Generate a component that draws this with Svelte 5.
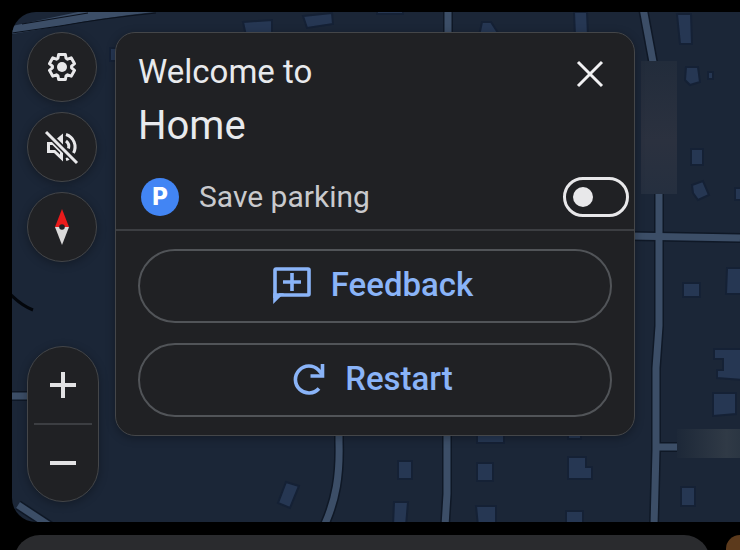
<script>
  let muted = $state(true);
  let saveParking = $state(false);

  // Outline of a six-toothed gear centred on 18,18.
  const gear = [0, 60, 120, 180, 240, 300]
    .flatMap((turn) => [
      [-25, 9.6],
      [-15, 13],
      [15, 13],
      [25, 9.6]
    ].map(([offset, radius]) => {
      const angle = ((turn + offset - 90) * Math.PI) / 180;
      return `${(18 + radius * Math.cos(angle)).toFixed(2)},${(18 + radius * Math.sin(angle)).toFixed(2)}`;
    }))
    .join(' ');

  const roads = [
    'M0 396 H40',
    'M18 505 L50 526',
    'M339 430 V442 C340 475 336 500 324 526',
    'M447 430 V494 L445 526',
    'M448 8 V40',
    'M643 8 L653 62',
    'M659 190 V326 L656 368 V450 L654 526',
    'M630 236 L740 238',
    'M657 447 H678'
  ];

  const buildings = [
    'M243 22 L272 20 V36 H246 Z',
    'M303 16 L332 13 L333 24 L307 28 Z',
    'M377 8 H403 V14 H377 Z',
    'M110 48 H120 V61 H110 Z',
    'M479 36 L482 22 H491 L500 36 Z',
    'M574 12 H587 L588 36 H575 Z',
    'M677 14 H691 L692 44 H680 Z',
    'M686 67 H698 L700 82 L690 85 L685 80 Z',
    'M708 72 H713 V79 H708 Z',
    'M691 149 H703 V165 H691 Z',
    'M692 185 L703 181 L709 195 L698 200 L693 193 Z',
    'M735 188 H742 V200 H735 Z',
    'M683 283 H700 V297 H683 Z',
    'M727 268 H742 V294 H726 Z',
    'M714 349 H742 V380 L717 378 V370 H723 V359 H714 Z',
    'M713 393 H736 V414 L713 416 Z',
    'M681 487 H695 V506 H681 Z',
    'M568 457 H586 V467 H592 V479 H568 Z',
    'M566 511 H583 V526 H566 Z',
    'M568 430 H581 V439 H568 Z',
    'M477 463 H493 V481 H477 Z',
    'M477 430 H504 V443 H477 Z',
    'M476 506 H496 V526 H478 Z',
    'M398 461 H412 V479 H398 Z',
    'M394 502 H408 L406 526 H393 Z',
    'M286 482 L299 486 L290 508 L278 503 Z'
  ];
</script>

<main>
  <section class="map" aria-label="Map">
    <svg class="tiles" viewBox="12 12 728 510" preserveAspectRatio="xMinYMin slice" aria-hidden="true">
      <defs>
        <linearGradient id="patchTall" x1="0" y1="0" x2="0" y2="1">
          <stop offset="0" stop-color="#222c3b" />
          <stop offset="0.6" stop-color="#2b313f" />
          <stop offset="1" stop-color="#252f3f" />
        </linearGradient>
        <linearGradient id="patchWide">
          <stop offset="0" stop-color="#1d2838" />
          <stop offset="0.75" stop-color="#303a46" />
          <stop offset="1" stop-color="#2a3542" />
        </linearGradient>
      </defs>
      {#each buildings as d}
        <path class="building" {d} />
      {/each}
      {#each roads as d}
        <path class="road-edge" {d} />
      {/each}
      {#each roads as d}
        <path class="road" {d} />
      {/each}
      <path d="M12 34 V26 L78 12 H154 Q100 18 60 26 Z" fill="#3c4e67" />
      <path d="M12 33 L60 26 Q105 18 156 13 M22 24 L88 13" fill="none" stroke="#0b121d" stroke-width="1" />
      <path class="river" d="M10 294 Q22 306 33 310" />
      <rect x="641" y="61" width="36" height="133" fill="url(#patchTall)" />
      <rect x="677" y="429" width="66" height="29" fill="url(#patchWide)" />
    </svg>

    <div class="controls">
      <div class="stack">
        <button class="round" aria-label="Settings">
          <svg width="36" height="36" viewBox="0 0 36 36" aria-hidden="true">
            <polygon points={gear} fill="none" stroke="#e8e8ea" stroke-width="3" stroke-linejoin="round" />
            <circle cx="18" cy="18" r="5" fill="#e8e8ea" />
          </svg>
        </button>
        <button class="round" aria-label="Sound" aria-pressed={muted} onclick={() => (muted = !muted)}>
          <svg width="36" height="36" viewBox="0 0 36 36" aria-hidden="true">
            <g fill="none" stroke="#e8e8ea" stroke-width="3">
              <path d="M4.500 14.500 H9 L17.500 23 V29 L10.500 22.500 H4.500 Z" />
              <path d="M22 5.500 A13 13 0 0 1 29.500 24" />
              <path d="M22 30.500 A13 13 0 0 0 25.500 29" />
              <path d="M22 12 A7 7 0 0 1 24.500 19.500" />
            </g>
            <path d="M13 9.500 L19 4.500 V15.500 Z" fill="#e8e8ea" />
            {#if muted}
              <path d="M3 6 L32 35" stroke="#202124" stroke-width="3" />
              <path d="M2 3 L33 34" stroke="#e8e8ea" stroke-width="3" />
            {/if}
          </svg>
        </button>
        <button class="round" aria-label="Compass">
          <svg width="16" height="36" viewBox="0 0 16 36" aria-hidden="true">
            <path d="M8 0 L15 18 H1 Z" fill="#ea1b1b" />
            <path d="M1 18 H15 L8 36 Z" fill="#dadada" />
            <circle cx="8" cy="18" r="2.800" fill="#202124" />
          </svg>
        </button>
      </div>

      <div class="zoom">
        <button aria-label="Zoom in">
          <svg width="26" height="26" viewBox="0 0 26 26" aria-hidden="true">
            <path d="M13 0 V26 M0 13 H26" stroke="#e2e2e4" stroke-width="4" />
          </svg>
        </button>
        <hr />
        <button aria-label="Zoom out">
          <svg width="26" height="26" viewBox="0 0 26 26" aria-hidden="true">
            <path d="M0 13 H26" stroke="#e2e2e4" stroke-width="4" />
          </svg>
        </button>
      </div>
    </div>

    <article class="card">
      <header>
        <h1>
          <span class="welcome">Welcome to</span>
          <span class="place">Home</span>
        </h1>
        <button class="close" aria-label="Close">
          <svg width="28" height="28" viewBox="0 0 28 28" aria-hidden="true">
            <path d="M2 2 L26 26 M26 2 L2 26" stroke="#f1f1f3" stroke-width="3" />
          </svg>
        </button>
      </header>

      <div class="parking">
        <span class="badge" aria-hidden="true">P</span>
        <label for="save-parking">Save parking</label>
        <input id="save-parking" type="checkbox" role="switch" bind:checked={saveParking} />
      </div>

      <div class="actions">
        <button>
          <svg width="38" height="38" viewBox="0 0 38 38" aria-hidden="true">
            <path d="M2 32 V4 Q2 3 3 3 H35 Q36 3 36 4 V28 Q36 29 35 29 H6" fill="none" stroke="#8ab4f8" stroke-width="3.600" />
            <path d="M0.200 27.200 H11 L0.200 38 Z" fill="#8ab4f8" />
            <path d="M19 7 V25 M10 16 H28" stroke="#8ab4f8" stroke-width="3.600" />
          </svg>
          Feedback
        </button>
        <button>
          <svg width="32" height="32" viewBox="0 0 32 32" aria-hidden="true">
            <path d="M26 25.500 A13.500 13.500 0 1 1 25.500 7 L29 11" fill="none" stroke="#8ab4f8" stroke-width="3.600" />
            <path d="M29.500 1 V13 H17.500" fill="none" stroke="#8ab4f8" stroke-width="3.600" />
          </svg>
          Restart
        </button>
      </div>
    </article>
  </section>

  <footer>
    <div class="sheet"></div>
    <div class="accent"></div>
  </footer>
</main>

<style>
  :global(body) {
    margin: 0;
    background: #000;
  }

  main {
    height: 100vh;
    min-height: 550px;
    box-sizing: border-box;
    padding: 12px 0 0 12px;
    display: flex;
    flex-direction: column;
    gap: 13px;
    overflow: hidden;
    font-family: Roboto, "Liberation Sans", sans-serif;
    color: #e8eaed;
  }

  button {
    display: flex;
    align-items: center;
    justify-content: center;
    box-sizing: border-box;
    padding: 0;
    border: 0;
    background: none;
    color: inherit;
    font: inherit;
    cursor: pointer;
  }

  .map {
    position: relative;
    flex: 1;
    box-sizing: border-box;
    display: flex;
    gap: 18px;
    padding: 20px 15px;
    border-radius: 24px 0 0 24px;
    background: #1b2637;
    overflow: hidden;
  }

  .tiles {
    position: absolute;
    inset: 0;
    width: 100%;
    height: 100%;
  }

  .building {
    fill: #263753;
    stroke: #152135;
    stroke-width: 2;
  }

  .road-edge {
    fill: none;
    stroke: #0f1826;
    stroke-width: 10;
  }

  .road {
    fill: none;
    stroke: #3c4e67;
    stroke-width: 7;
  }

  .river {
    fill: none;
    stroke: #03060b;
    stroke-width: 3;
  }

  .controls {
    position: relative;
    display: flex;
    flex-direction: column;
    justify-content: space-between;
  }

  .stack {
    display: flex;
    flex-direction: column;
    gap: 10px;
  }

  .round,
  .zoom,
  .card {
    background: #202124;
    border: 1px solid #444649;
    box-shadow: 0 2px 10px rgba(0, 0, 0, 0.3);
  }

  .round {
    width: 70px;
    height: 70px;
    border-radius: 50%;
  }

  .zoom {
    box-sizing: border-box;
    width: 72px;
    height: 156px;
    border-radius: 36px;
    display: flex;
    flex-direction: column;
  }

  .zoom button {
    flex: 1;
  }

  .zoom hr {
    width: 58px;
    margin: 0 auto;
    border: 0;
    border-top: 2px solid #3c3e42;
  }

  .card {
    position: relative;
    flex: 0 1 520px;
    align-self: flex-start;
    box-sizing: border-box;
    margin-left: -2px;
    border-radius: 20px;
  }

  header {
    display: flex;
    justify-content: space-between;
    align-items: flex-start;
    padding: 15px 24px 0 22px;
  }

  h1 {
    margin: 0;
    font-weight: 400;
  }

  h1 span {
    display: block;
  }

  .welcome {
    font-size: 33px;
    line-height: 48px;
  }

  .place {
    font-size: 40px;
    line-height: 60px;
  }

  .close {
    width: 40px;
    height: 52px;
  }

  .parking {
    display: flex;
    align-items: center;
    padding: 21px 5px 12px 25px;
    border-bottom: 2px solid #3c3e42;
  }

  .badge {
    width: 38px;
    height: 38px;
    border-radius: 50%;
    background: #4285f4;
    color: #fff;
    font: 800 24px/38px Inter, sans-serif;
    text-align: center;
  }

  label {
    flex: 1;
    margin-left: 20px;
    font-size: 30px;
    line-height: 40px;
    color: #c9cacd;
  }

  input {
    appearance: none;
    display: flex;
    align-items: center;
    box-sizing: border-box;
    width: 66px;
    height: 40px;
    margin: 0;
    padding: 0 7px;
    border: 3px solid #e8e8ea;
    border-radius: 20px;
    cursor: pointer;
  }

  input::before {
    content: "";
    width: 20px;
    height: 20px;
    border-radius: 50%;
    background: #e8e8ea;
  }

  input:checked {
    justify-content: flex-end;
  }

  .actions {
    display: flex;
    flex-direction: column;
    gap: 20px;
    padding: 18px 22px;
  }

  .actions button {
    gap: 20px;
    height: 74px;
    padding: 0 4px 3px 0;
    border: 2px solid #515458;
    border-radius: 37px;
    color: #8ab4f8;
    font-size: 33px;
    font-weight: 500;
  }

  footer {
    flex: none;
    height: 15px;
    display: flex;
    gap: 16px;
    padding-left: 2px;
  }

  .sheet {
    flex: 1;
    height: 60px;
    border-radius: 26px;
    background: #2a2b2e;
  }

  .accent {
    width: 14px;
    height: 60px;
    border-radius: 24px 0 0 0;
    background: #5c3a1c;
  }
</style>
